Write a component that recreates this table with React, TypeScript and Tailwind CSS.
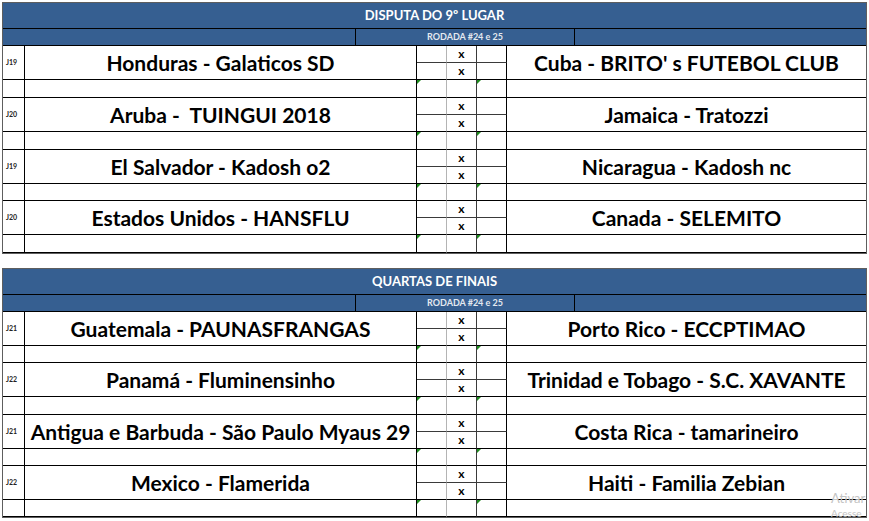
import React from 'react'

type Match = { j: string; home: string; away: string; tall?: boolean }

const sections: { title: string; matches: Match[] }[] = [
  {
    title: 'DISPUTA DO 9º LUGAR',
    matches: [
      { j: 'J19', home: 'Honduras - Galaticos SD', away: "Cuba - BRITO' s FUTEBOL CLUB", tall: true },
      { j: 'J20', home: 'Aruba -  TUINGUI 2018', away: 'Jamaica - Tratozzi', tall: true },
      { j: 'J19', home: 'El Salvador - Kadosh o2', away: 'Nicaragua - Kadosh nc' },
      { j: 'J20', home: 'Estados Unidos - HANSFLU', away: 'Canada - SELEMITO', tall: true },
    ],
  },
  {
    title: 'QUARTAS DE FINAIS',
    matches: [
      { j: 'J21', home: 'Guatemala - PAUNASFRANGAS', away: 'Porto Rico - ECCPTIMAO' },
      { j: 'J22', home: 'Panamá - Fluminensinho', away: 'Trinidad e Tobago - S.C. XAVANTE', tall: true },
      { j: 'J21', home: 'Antigua e Barbuda - São Paulo Myaus 29', away: 'Costa Rica - tamarineiro' },
      { j: 'J22', home: 'Mexico - Flamerida', away: 'Haiti - Familia Zebian' },
    ],
  },
]

function Flag() {
  // little green corner mark Excel draws on a cell
  return (
    <span className="absolute left-0 top-0 h-0 w-0 border-t-[4px] border-r-[4px] border-t-[#1e8c1e] border-r-transparent" />
  )
}

function MatchBlock({ m }: { m: Match }) {
  const rows = m.tall ? 'grid-rows-[17px_17px_18px]' : 'grid-rows-[17px_17px_17px]'
  return (
    <div className={`grid grid-cols-[22px_392px_30px_30px_30px_1fr] ${rows} text-black`}>
      <div className="row-span-2 flex items-center border-r border-b border-black pl-[3px] text-[7px] font-bold text-[#222]">
        {m.j}
      </div>
      <div className="row-span-2 flex items-center justify-center whitespace-pre border-r border-b border-black text-[21px] font-bold">
        {m.home}
      </div>
      <div className="border-r border-b border-r-[#b4b4b4] border-b-[#3a3a3a]" />
      <div className="flex items-center justify-center border-r border-b border-r-[#3a3a3a] border-b-[#3a3a3a] text-[12px] font-bold">
        x
      </div>
      <div className="border-r border-b border-black border-b-[#3a3a3a]" />
      <div className="row-span-2 flex items-center justify-center border-b border-black text-[21px] font-bold">
        {m.away}
      </div>
      <div className="border-r border-b border-r-[#b4b4b4] border-b-black" />
      <div className="flex items-center justify-center border-r border-b border-r-[#3a3a3a] border-b-black text-[12px] font-bold">
        x
      </div>
      <div className="border-r border-b border-black" />

      <div className="border-r border-b border-black" />
      <div className="border-r border-b border-black" />
      <div className="relative border-r border-b border-r-[#b4b4b4] border-b-black">
        <Flag />
      </div>
      <div className="border-r border-b border-r-[#3a3a3a] border-b-black" />
      <div className="relative border-r border-b border-black">
        <Flag />
      </div>
      <div className="border-b border-black" />
    </div>
  )
}

function Section({ title, matches }: { title: string; matches: Match[] }) {
  return (
    <div className="ml-[2px] w-[865px] border border-[#5e5e5e]">
      <div className="flex h-[26px] items-center justify-center border-b border-black bg-[#365f91] text-[13px] font-bold text-white">
        {title}
      </div>
      <div className="flex h-[17px] border-b border-black bg-[#365f91]">
        <div className="w-[353px] border-r border-black" />
        <div className="flex w-[219px] items-center justify-center border-r border-black text-[9px] font-bold text-[#e4e9f0]">
          RODADA #24 e 25
        </div>
        <div className="flex-1" />
      </div>
      {matches.map((m, i) => (
        <MatchBlock key={i} m={m} />
      ))}
    </div>
  )
}

export default function App() {
  return (
    <div
      className="relative h-[521px] w-[869px] overflow-hidden bg-white pt-[2px]"
      style={{ fontFamily: 'Lato, "Open Sans", sans-serif' }}
    >
      <div className="flex flex-col gap-[14px]">
        {sections.map((s) => (
          <Section key={s.title} title={s.title} matches={s.matches} />
        ))}
      </div>

      <div className="pointer-events-none absolute left-[831px] top-[490px] whitespace-nowrap text-[#c4c4c4]">
        <div className="text-[13px] leading-[16px]">Ativar</div>
        <div className="text-[10px] leading-[14px]">Acesse</div>
      </div>
    </div>
  )
}
